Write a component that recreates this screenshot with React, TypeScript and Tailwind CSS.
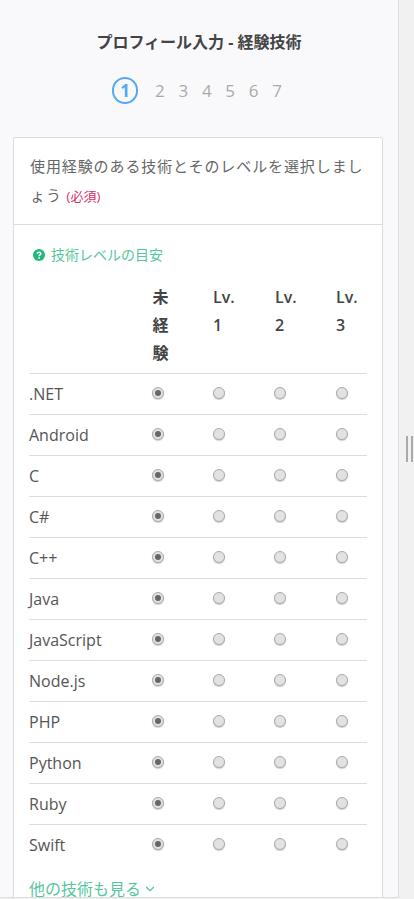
import { ChevronDown } from 'lucide-react';

const skills = ['.NET', 'Android', 'C', 'C#', 'C++', 'Java', 'JavaScript', 'Node.js', 'PHP', 'Python', 'Ruby', 'Swift'];
const font = { fontFamily: '"Open Sans", "Noto Sans CJK JP", sans-serif' };

const Radio = ({ checked }: { checked?: boolean }) => (
  <span className="-mt-[2px] flex h-3 w-3 items-center justify-center rounded-full border border-[#aaaaaa] bg-[#e2e2e2] shadow-[0_1px_1px_rgba(0,0,0,0.2)]">
    {checked && <span className="h-[6px] w-[6px] rounded-full bg-[#666666]" />}
  </span>
);

const SkillRow = ({ name }: { name: string }) => (
  <div className="grid h-[41px] grid-cols-[123px_61px_61px_62px_31px] items-center border-t border-[#dddddd]">
    <span className="text-[16px] text-[#555555]">{name}</span>
    <Radio checked />
    <Radio />
    <Radio />
    <Radio />
  </div>
);

export default function App() {
  return (
    <div style={font} className="flex h-[899px] overflow-hidden bg-[#f1f1f1]">
      <div className="relative h-[898px] w-[399px] shrink-0 overflow-hidden border-r border-b border-[#dddddd] bg-[#f9f9fc] pt-[33px]">
        <h1 className="text-center text-[16px] leading-[18px] font-bold text-[#444444]">プロフィール入力 - 経験技術</h1>

        <div className="mt-[26px] flex items-center justify-center pr-[4px] text-[17px] text-[#aaaaaa]">
          <span className="mr-[17px] flex h-[27px] w-[26px] items-center justify-center rounded-full border-2 border-[#55a8f2] font-bold text-[#55a8f2]">1</span>
          <div className="flex gap-[13.7px]">
            <span>2</span>
            <span>3</span>
            <span>4</span>
            <span>5</span>
            <span>6</span>
            <span>7</span>
          </div>
        </div>

        <div className="mt-[33px] mr-[15px] ml-[13px] h-[800px] rounded-[2px] border border-[#dddddd] bg-white">
          <div className="border-b border-[#dddddd] px-[16px] pt-[14px] pb-[13px] text-[15px] leading-[29px] tracking-[0.9px] text-[#666666]">
            使用経験のある技術とそのレベルを選択しましょう <span className="text-[13px] tracking-normal text-[#d9305f]">(必須)</span>
          </div>

          <div className="px-[15px]">
            <div className="mt-[18px] flex items-center pl-[4px] text-[14px] leading-[24px] text-[#56c79a]">
              <svg viewBox="0 0 24 24" className="mr-[6px] h-[12px] w-[12px]">
                <circle cx="12" cy="12" r="12" fill="#1db97c" />
                <path d="M8.5 9.5c0-2 1.5-3.2 3.6-3.2s3.6 1.2 3.6 3c0 2.6-3.4 2.6-3.4 5" fill="none" stroke="#fff" strokeWidth="3" />
                <circle cx="12.3" cy="18" r="1.8" fill="#fff" />
              </svg>
              技術レベルの目安
            </div>

            <div className="mt-[16px] grid h-[90px] grid-cols-[124px_60px_62px_61px_30px] text-[16px] leading-[28px] font-semibold text-[#444444]">
              <span />
              <span className="-ml-[0.5px] w-[16px]">未経験</span>
              <span className="w-[20px]">Lv. 1</span>
              <span className="w-[20px]">Lv. 2</span>
              <span className="w-[20px]">Lv. 3</span>
            </div>

            {skills.map((name) => (
              <SkillRow key={name} name={name} />
            ))}

            <div className="mt-[15px] flex items-center text-[16px] leading-[18px] text-[#56c79a]">
              他の技術も見る
              <ChevronDown className="ml-[2px] h-[14px] w-[14px]" strokeWidth={2} />
            </div>
          </div>
        </div>
      </div>

      <div className="relative flex-1">
        <div className="absolute top-[436px] left-[7px] flex gap-[3px]">
          <span className="h-[26px] w-[2px] bg-[#aaaaaa]" />
          <span className="h-[26px] w-[2px] bg-[#aaaaaa]" />
        </div>
      </div>
    </div>
  );
}
